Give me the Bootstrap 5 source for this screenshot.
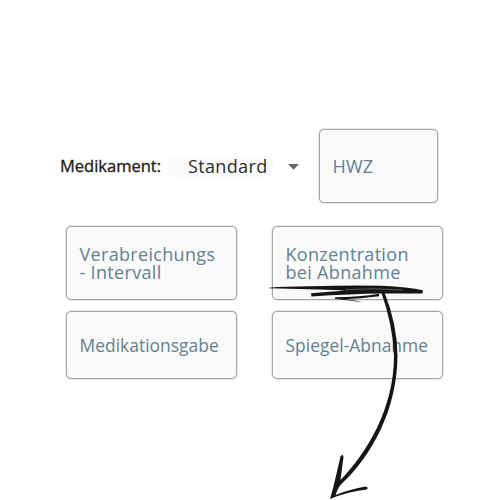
<!DOCTYPE html>
<html lang="de">
<head>
<meta charset="utf-8">
<meta name="viewport" content="width=device-width, initial-scale=1">
<title>Medikament</title>
<link href="https://cdn.jsdelivr.net/npm/bootstrap@5.3.0/dist/css/bootstrap.min.css" rel="stylesheet">
<style>
body { font-family: "Open Sans", sans-serif; background: #fff; }
.panel { width: 500px; height: 500px; padding: 129px 56px 0 60px; }
.med-row { height: 74px; }
.med-label { width: 107px; font-size: 16.5px; color: #222; -webkit-text-stroke: .35px #222; padding-top: 1px; }
.med-select { width: 133px; height: 24px; font-size: 18px; letter-spacing: .35px; color: #2b2b2b; padding-left: 21px; }
.med-select::before { content: ""; position: absolute; z-index: -1; inset: 0 26px 0 0; background: #fbfbfb; border-radius: 12px; }
.caret { width: 11px; height: 6px; margin-left: 20px; margin-top: 1px; }
.field { border: 1px solid #a6a6a6; box-shadow: 0 0 0 .5px #d0d0d0; border-radius: 5px; background: #fafafa; color: #648190; font-size: 18px; line-height: 18px; padding: 0 0 0 12.5px; }
.field-hwz { width: 119px; height: 74px; margin-left: 19px; letter-spacing: .2px; }
.fields { display: grid; grid-template-columns: 171px 171px; grid-template-rows: 74px 68px; gap: 11px 35px; margin: 23px 0 0 6px; }
.ls-a { letter-spacing: .32px; }
.ls-b { font-size: 17.4px; letter-spacing: .03px; }
</style>
</head>
<body>
<main class="panel position-relative overflow-hidden">
  <div class="med-row d-flex align-items-center">
    <div class="med-label text-nowrap">Medikament:</div>
    <div class="med-select position-relative z-0 d-flex align-items-center text-nowrap">
      <span>Standard</span>
      <svg class="caret flex-shrink-0" viewBox="0 0 11 6"><path d="M0 0H11L5.5 5.7Z" fill="#666"/></svg>
    </div>
    <div class="field field-hwz d-flex align-items-center"><span>HWZ</span></div>
  </div>
  <div class="fields">
    <div class="field d-flex align-items-center"><span class="ls-a">Verabreichungs<br>- Intervall</span></div>
    <div class="field d-flex align-items-center"><span class="ls-a">Konzentration<br>bei Abnahme</span></div>
    <div class="field d-flex align-items-center"><span class="ls-b">Medikationsgabe</span></div>
    <div class="field d-flex align-items-center"><span class="ls-b">Spiegel-Abnahme</span></div>
  </div>
  <svg class="position-absolute top-0 start-0 pe-none" width="500" height="500" viewBox="0 0 500 500" fill="#151515">
    <path d="M269 287.700 Q285 286.500 310 286.300 Q350 285 382 285.700 Q408 287 423 290.300 L422.500 293.600 Q400 293.300 383 293.500 Q350 294 311.500 296.400 L311 293.300 Q330 291.800 345 290.500 Q310 289.300 269 288.300Z"/>
    <path d="M345 289.700 Q375 287.800 403 290" fill="none" stroke="#888" stroke-width=".6"/>
    <path d="M335 297.300 Q360 297 379 293.800 L379 296.300 Q360 298.600 345 299.300 Q355 300 363 302.500 Q350 300.300 335 298.800Z"/>
    <path d="M380.500 290 L384 291 Q397.500 325 397.500 356 C397 410 372 456 340 485.500 Q337 490 335.500 495 Q350 489 366 486.500 Q369 488 366.500 489.600 Q347 492 330 499 C334 486 337 471 340.500 456.500 Q343 453.500 343.500 457 Q342 468 340.500 480 C367 453 394 408 394 356 Q393 325 380.500 290Z"/>
  </svg>
</main>
<script src="https://cdn.jsdelivr.net/npm/bootstrap@5.3.0/dist/js/bootstrap.bundle.min.js"></script>
</body>
</html>
